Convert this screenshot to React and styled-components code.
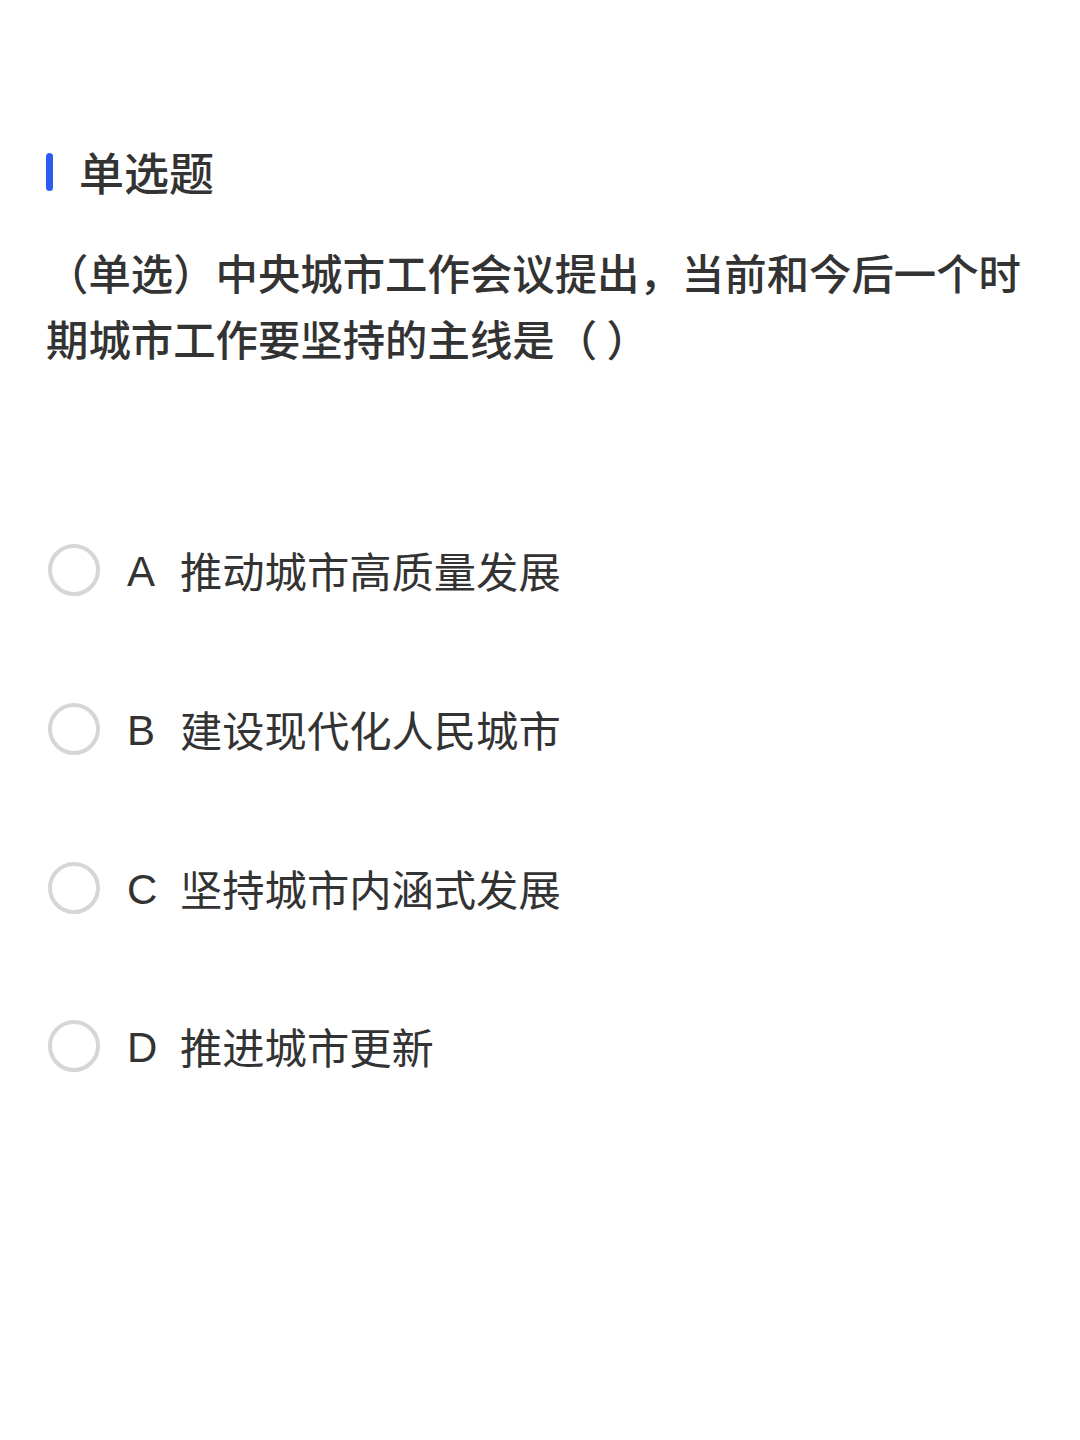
import React from "react";
import styled, { createGlobalStyle } from "styled-components";

const Global = createGlobalStyle`
  html, body { margin: 0; padding: 0; background: #ffffff; }
  body { font-family: "Noto Sans CJK SC", "Noto Sans", sans-serif; color: #333333; }
`;

const Page = styled.div`
  width: 1080px;
  min-height: 1440px;
  box-sizing: border-box;
  padding: 142px 46px 0 46px;
  background: #ffffff;
`;

const TitleRow = styled.div`
  display: flex;
  align-items: center;
  height: 60px;
  gap: 26px;
`;

const TitleBar = styled.span`
  display: block;
  width: 7px;
  height: 38px;
  border-radius: 4px;
  background: #2d5cf2;
`;

const Title = styled.h2`
  margin: 0;
  font-size: 45px;
  line-height: 60px;
  font-weight: 500;
  color: #333333;
`;

const Question = styled.p`
  margin: 37px 0 0 0;
  font-size: 42.4px;
  line-height: 66px;
  font-weight: 500;
  color: #333333;
`;

const Options = styled.div`
  display: flex;
  flex-direction: column;
  margin-top: 120px;
`;

const OptionRow = styled.label`
  display: flex;
  align-items: center;
  height: 158.7px;
  cursor: pointer;
`;

const Radio = styled.span`
  display: block;
  box-sizing: border-box;
  width: 52px;
  height: 52px;
  margin-left: 2px;
  border-radius: 50%;
  border: 4px solid #d6d6d6;
  background: #ffffff;
`;

const Letter = styled.span`
  margin-left: 27px;
  width: 53px;
  padding-top: 4px;
  font-family: "Liberation Sans", "Noto Sans CJK SC", sans-serif;
  font-size: 42px;
  line-height: 60px;
  font-weight: 400;
  color: #333333;
`;

const OptionText = styled.span`
  font-size: 42.3px;
  line-height: 60px;
  font-weight: 400;
  color: #333333;
`;

const options = [
  { key: "A", text: "推动城市高质量发展" },
  { key: "B", text: "建设现代化人民城市" },
  { key: "C", text: "坚持城市内涵式发展" },
  { key: "D", text: "推进城市更新" },
];

export default function App() {
  return (
    <>
      <Global />
      <Page>
        <TitleRow>
          <TitleBar />
          <Title>单选题</Title>
        </TitleRow>
        <Question>（单选）中央城市工作会议提出，当前和今后一个时期城市工作要坚持的主线是（ ）</Question>
        <Options>
          {options.map((o) => (
            <OptionRow key={o.key}>
              <Radio />
              <Letter>{o.key}</Letter>
              <OptionText>{o.text}</OptionText>
            </OptionRow>
          ))}
        </Options>
      </Page>
    </>
  );
}
